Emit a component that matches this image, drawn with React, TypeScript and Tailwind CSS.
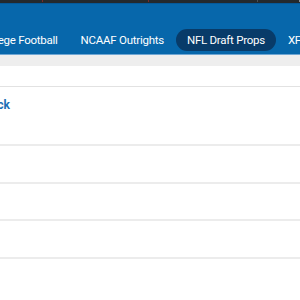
const tabs = ["College Football", "NCAAF Outrights", "NFL Draft Props", "XFL", "UFL"];

export default function App() {
  return (
    <div className="h-[300px] w-[300px] overflow-hidden bg-white font-['Roboto',sans-serif]">
      <div className="flex h-[3px] bg-[#24292d]">
        <div className="ml-[42px] h-[2px] w-[5px] bg-[#7a2a2a]" />
        <div className="ml-[105px] h-[2px] w-[6px] bg-[#7a2a2a]" />
        <div className="ml-[108px] h-[2px] w-[3px] bg-[#4a5056]" />
        <div className="ml-[42px] h-[2px] w-[6px] bg-[#8a8f94]" />
      </div>
      <div className="flex h-[51px] items-end border-t border-[#05599a] bg-[#0767ab] pb-[3px]">
        <div className="-ml-[32px] flex items-center gap-[1px] whitespace-nowrap text-[11.5px] tracking-[-0.25px] text-white">
          {tabs.map((t) => (
            <span
              key={t}
              className={`rounded-full px-[11px] py-[3px] leading-[16px] ${
                t === "NFL Draft Props" ? "bg-[#083b69]" : ""
              }`}
            >
              {t}
            </span>
          ))}
        </div>
      </div>
      <div className="h-[1px] bg-[#6fa6d3]" />
      <div className="h-[11px] bg-[#eeeeee]" />
      <div className="h-[21px] border-b border-[#e2e2e2]" />
      <div className="h-[59px] border-b-2 border-[#ececec] pt-[5px]">
        <span className="-ml-[21px] text-[12px] font-bold leading-[16px] text-[#1d6fb5]">Quick</span>
      </div>
      <div className="h-[38px] border-b-2 border-[#ececec]" />
      <div className="h-[37px] border-b-2 border-[#ececec]" />
      <div className="h-[38px] border-b-2 border-[#ececec]" />
    </div>
  );
}
